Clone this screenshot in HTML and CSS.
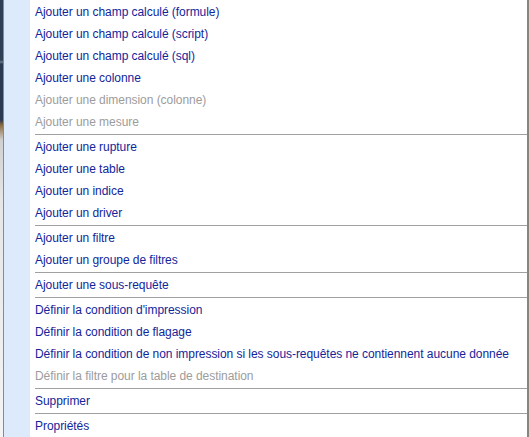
FILE: index.html
```html
<!DOCTYPE html>
<html lang="fr">
<head>
    <meta charset="UTF-8">
    <title>Menu contextuel</title>
    <link rel="stylesheet" href="styles.css">
</head>
<body>
    <div class="desk"></div>
    <ul class="menu">
        <li class="item">Ajouter un champ calculé (formule)</li>
        <li class="item">Ajouter un champ calculé (script)</li>
        <li class="item">Ajouter un champ calculé (sql)</li>
        <li class="item">Ajouter une colonne</li>
        <li class="item disabled">Ajouter une dimension (colonne)</li>
        <li class="item disabled">Ajouter une mesure</li>
        <li class="sep"></li>
        <li class="item">Ajouter une rupture</li>
        <li class="item">Ajouter une table</li>
        <li class="item">Ajouter un indice</li>
        <li class="item">Ajouter un driver</li>
        <li class="sep"></li>
        <li class="item">Ajouter un filtre</li>
        <li class="item">Ajouter un groupe de filtres</li>
        <li class="sep"></li>
        <li class="item">Ajouter une sous-requête</li>
        <li class="sep"></li>
        <li class="item">Définir la condition d'impression</li>
        <li class="item">Définir la condition de flagage</li>
        <li class="item">Définir la condition de non impression si les sous-requêtes ne contiennent aucune donnée</li>
        <li class="item disabled">Définir la filtre pour la table de destination</li>
        <li class="sep"></li>
        <li class="item">Supprimer</li>
        <li class="sep"></li>
        <li class="item">Propriétés</li>
    </ul>
</body>
</html>
```

FILE: styles.css
```css
* {
    margin: 0;
    padding: 0;
    box-sizing: border-box;
}

html, body {
    height: 100%;
}

body {
    display: flex;
    overflow: hidden;
    background: #fff;
    font-family: "Liberation Sans", Arial, sans-serif;
    font-size: 12px;
}

/* bit of the application window behind the menu */
.desk {
    width: 3px;
    flex: none;
    background: linear-gradient(to bottom, #2f3f55 0, #2f3f55 60px, #6a7a8a 62px, #2b3a50 64px, #2b3a50 120px, #8a6a40 125px, #d0d0d0 140px, #e6e6e6 200px, #f4f4f4 437px);
}

.menu {
    list-style: none;
    flex: 1;
    padding-top: 1px;
    border-left: 1px solid #8a8a8a;
    border-right: 2px solid #86867c;
    background: linear-gradient(to right, #dceafc 26px, #fff 26px);
}

.item {
    height: 22px;
    line-height: 22px;
    padding-left: 31px;
    color: #13259a;
    letter-spacing: -0.05px;
    white-space: nowrap;
}

.item.disabled {
    color: #9c9c9c;
}

.sep {
    height: 3px;
    margin-left: 31px;
    padding-top: 1px;
}

.sep::before {
    content: "";
    display: block;
    height: 1px;
    background: #a0a0a0;
}
```
